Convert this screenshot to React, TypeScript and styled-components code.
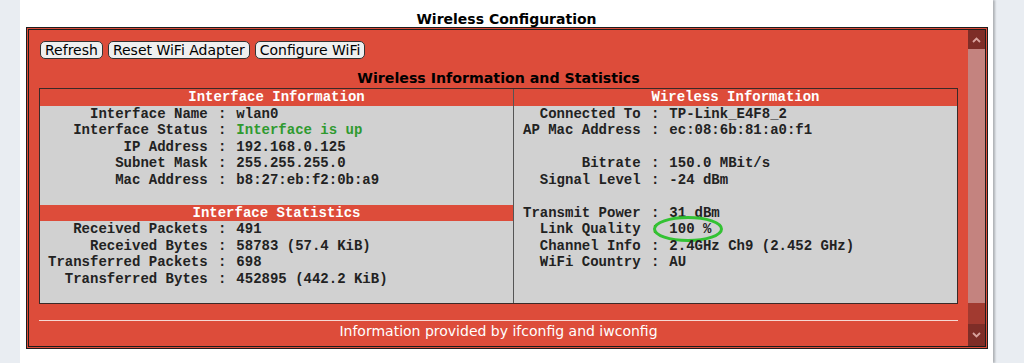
import styled, { createGlobalStyle } from "styled-components";

const GlobalStyle = createGlobalStyle`
  html, body {
    margin: 0;
    padding: 0;
    background: #e9edf2;
  }
  body {
    font-family: "DejaVu Sans", Verdana, sans-serif;
  }
`;

const Page = styled.div`
  margin-left: 20px;
  width: 973px;
  height: 363px;
  background: #ffffff;
  box-shadow: 2px 0 2px rgba(0, 0, 0, 0.25);
  overflow: hidden;
`;

const PageTitle = styled.h3`
  margin: 0;
  padding-top: 11px;
  height: 16px;
  text-align: center;
  font-size: 14px;
  font-weight: bold;
  line-height: 16px;
  color: #000;
`;

const Panel = styled.div`
  margin: 0 0 0 6px;
  width: 962px;
  height: 322px;
  box-sizing: border-box;
  border: 3px double #1d1d1d;
  background: #dd4c3a;
  display: flex;
`;

const Content = styled.div`
  flex: 1;
  padding: 11px 10px 0 10px;
  display: flex;
  flex-direction: column;
`;

const ButtonRow = styled.div`
  display: flex;
  gap: 5px;
  padding-left: 1px;
`;

const Button = styled.button`
  height: 18px;
  padding: 0 4px;
  border: 1px solid #333;
  border-radius: 5px;
  background: #efefef;
  font-family: "DejaVu Sans", Verdana, sans-serif;
  font-size: 14px;
  line-height: 16px;
  color: #000;
`;

const SectionTitle = styled.h4`
  margin: 11px 0 1px 0;
  text-align: center;
  font-size: 14.2px;
  font-weight: bold;
  line-height: 17px;
  color: #000;
`;

const InfoTable = styled.div`
  display: grid;
  grid-template-columns: 473px 1fr;
  height: 216px;
  box-sizing: border-box;
  border: 1px solid #3a2a28;
  background: #d1d1d1;
  font-family: "Liberation Mono", "Courier New", monospace;
  font-weight: bold;
  font-size: 14px;
  line-height: 16.5px;
  color: #222;
`;

const Column = styled.div<{ divider?: boolean }>`
  border-left: ${({ divider }) => (divider ? "1px solid #555" : "none")};
`;

const HeaderBar = styled.div`
  background: #dd4c3a;
  color: #fff;
  text-align: center;
  font-weight: bold;
`;

const Row = styled.div<{ pad: number }>`
  display: flex;
  padding-left: ${({ pad }) => pad}px;
  height: 16.5px;
  white-space: pre;
`;

const Label = styled.span<{ width: number }>`
  display: inline-block;
  width: ${({ width }) => width}ch;
  text-align: right;
`;

const Separator = styled.span`
  margin: 0 1.5px 0 2px;
`;

const Value = styled.span<{ ok?: boolean }>`
  position: relative;
  color: ${({ ok }) => (ok ? "#2f9a2f" : "#222")};
`;

const Highlight = styled.svg`
  position: absolute;
  left: -16px;
  top: 50%;
  transform: translateY(-50%);
  overflow: visible;
  pointer-events: none;
`;

const Blank = styled.div`
  height: 16.5px;
`;

const FooterRule = styled.div`
  margin-top: 16px;
  height: 1px;
  background: #f6d8d3;
`;

const Footer = styled.div`
  text-align: center;
  color: #fff;
  font-size: 14px;
  line-height: 16px;
  padding-top: 2px;
`;

const Scrollbar = styled.div`
  width: 17px;
  display: flex;
  flex-direction: column;
  background: #c4837f;
`;

const ScrollArrow = styled.div<{ h: number }>`
  height: ${({ h }) => h}px;
  background: #7e2d27;
  display: flex;
  align-items: center;
  justify-content: center;
`;

const ScrollTrack = styled.div`
  flex: 1;
`;

const ScrollThumb = styled.div`
  height: 21px;
  background: #a23a30;
`;

type Item = { label?: string; value?: string; ok?: boolean; mark?: boolean; header?: string };

const leftItems: Item[] = [
  { header: "Interface Information" },
  { label: "Interface Name", value: "wlan0" },
  { label: "Interface Status", value: "Interface is up", ok: true },
  { label: "IP Address", value: "192.168.0.125" },
  { label: "Subnet Mask", value: "255.255.255.0" },
  { label: "Mac Address", value: "b8:27:eb:f2:0b:a9" },
  {},
  { header: "Interface Statistics" },
  { label: "Received Packets", value: "491" },
  { label: "Received Bytes", value: "58783 (57.4 KiB)" },
  { label: "Transferred Packets", value: "698" },
  { label: "Transferred Bytes", value: "452895 (442.2 KiB)" },
];

const rightItems: Item[] = [
  { header: "Wireless Information" },
  { label: "Connected To", value: "TP-Link_E4F8_2" },
  { label: "AP Mac Address", value: "ec:08:6b:81:a0:f1" },
  {},
  { label: "Bitrate", value: "150.0 MBit/s" },
  { label: "Signal Level", value: "-24 dBm" },
  {},
  { label: "Transmit Power", value: "31 dBm" },
  { label: "Link Quality", value: "100 %", mark: true },
  { label: "Channel Info", value: "2.4GHz Ch9 (2.452 GHz)" },
  { label: "WiFi Country", value: "AU" },
];

function InfoColumn({ items, width, pad, divider }: { items: Item[]; width: number; pad: number; divider?: boolean }) {
  return (
    <Column divider={divider}>
      {items.map((item, i) => {
        if (item.header) return <HeaderBar key={i}>{item.header}</HeaderBar>;
        if (!item.label) return <Blank key={i} />;
        return (
          <Row key={i} pad={pad}>
            <Label width={width}>{item.label}</Label>
            <Separator>{" : "}</Separator>
            <Value ok={item.ok}>
              {item.value}
              {item.mark && (
                <Highlight width="70" height="26" viewBox="0 0 70 26">
                  <ellipse cx="35" cy="13" rx="33.5" ry="11.5" fill="none" stroke="#33c233" strokeWidth="3" />
                </Highlight>
              )}
            </Value>
          </Row>
        );
      })}
    </Column>
  );
}

function Chevron({ up }: { up?: boolean }) {
  return (
    <svg width="9" height="6" viewBox="0 0 9 6">
      <polyline
        points={up ? "1,5 4.5,1.5 8,5" : "1,1 4.5,4.5 8,1"}
        fill="none"
        stroke="#d9a29d"
        strokeWidth="1.8"
      />
    </svg>
  );
}

export default function App() {
  return (
    <>
      <GlobalStyle />
      <Page>
        <PageTitle>Wireless Configuration</PageTitle>
        <Panel>
          <Content>
            <ButtonRow>
              <Button>Refresh</Button>
              <Button>Reset WiFi Adapter</Button>
              <Button>Configure WiFi</Button>
            </ButtonRow>
            <SectionTitle>Wireless Information and Statistics</SectionTitle>
            <InfoTable>
              <InfoColumn items={leftItems} width={19} pad={8} />
              <InfoColumn items={rightItems} width={14} pad={9} divider />
            </InfoTable>
            <FooterRule />
            <Footer>Information provided by ifconfig and iwconfig</Footer>
          </Content>
          <Scrollbar>
            <ScrollArrow h={19}>
              <Chevron up />
            </ScrollArrow>
            <ScrollTrack />
            <ScrollThumb />
            <ScrollArrow h={22}>
              <Chevron />
            </ScrollArrow>
          </Scrollbar>
        </Panel>
      </Page>
    </>
  );
}
